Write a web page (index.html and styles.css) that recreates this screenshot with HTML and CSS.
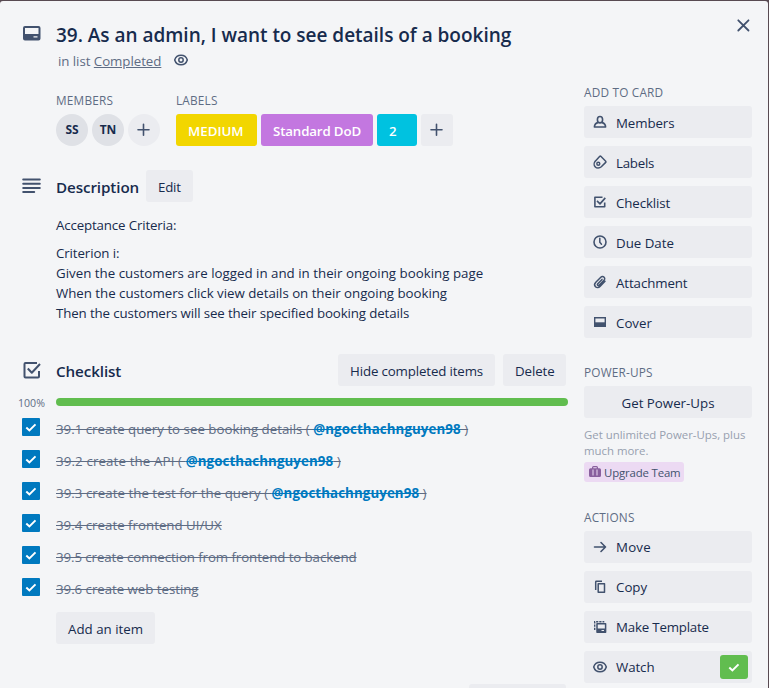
FILE: index.html
```html
<!DOCTYPE html>
<html lang="en">
<head>
<meta charset="utf-8">
<title>Card details</title>
<link rel="stylesheet" href="styles.css">
</head>
<body>
<svg class="defs" width="0" height="0">
  <symbol id="card" viewBox="0 0 20 18"><path fill="none" stroke="currentColor" stroke-width="2" d="M3 3h13.500a1 1 0 0 1 1 1v10.500a1 1 0 0 1-1 1H3a1 1 0 0 1-1-1V4a1 1 0 0 1 1-1z"/><path fill="currentColor" fill-rule="evenodd" d="M2 10h16v5.500H2zM11.500 12.300v1.200h4v-1.200z"/></symbol>
  <symbol id="eye" viewBox="0 0 16 14"><path fill="none" stroke="currentColor" stroke-width="1.500" d="M1.700 7C2.700 3.700 5 2.300 8 2.300S13.300 3.700 14.300 7C13.300 10.300 11 11.700 8 11.700S2.700 10.300 1.700 7z"/><circle cx="8" cy="7" r="2.200" fill="none" stroke="currentColor" stroke-width="1.500"/></symbol>
  <symbol id="plus" viewBox="0 0 14 14"><path stroke="currentColor" stroke-width="1.600" stroke-linecap="round" d="M6.500 1.300v10.900M1 6.700h11"/></symbol>
  <symbol id="check" viewBox="0 0 18 18"><path fill="none" stroke="currentColor" stroke-width="2" d="M4.300 9.500l3.100 2.900 6.100-6"/></symbol>
  <symbol id="checklist" viewBox="0 0 20 20"><path fill="none" stroke="currentColor" stroke-width="2" stroke-linejoin="round" d="M15 3H3.500a1 1 0 0 0-1 1v12.500a1 1 0 0 0 1 1H16a1 1 0 0 0 1-1V11M5.800 8.500l4 4.200L18 4"/></symbol>
  <symbol id="checklist-s" viewBox="0 0 16 16"><path fill="none" stroke="currentColor" stroke-width="1.600" stroke-linejoin="round" d="M10.500 3.200H2.900v9.600h9.800V8.500M5 6.900l3 3 5.300-6"/></symbol>
  <symbol id="person" viewBox="0 0 16 16"><path fill="none" stroke="currentColor" stroke-width="1.600" stroke-linejoin="round" d="M6 8.600C3.600 9 2.500 10.300 2.400 13h11.200C13.500 10.300 12.400 9 10 8.600"/><ellipse cx="8" cy="5.700" rx="2.600" ry="3.200" fill="none" stroke="currentColor" stroke-width="1.600"/></symbol>
  <symbol id="tag" viewBox="0 0 16 16"><path fill="none" stroke="currentColor" stroke-width="1.500" stroke-linejoin="round" d="M8.800 2.300l4.900 4.900c.4.400.4.800 0 1.200L9.300 12.800c-1.800 1.700-4.500 1.700-6 .1-1.600-1.600-1.500-4.300.2-6l4.300-4.600c.3-.3.700-.3 1 0z"/><circle cx="6.300" cy="9.700" r="1.500" fill="none" stroke="currentColor" stroke-width="1.400"/></symbol>
  <symbol id="clock" viewBox="0 0 16 16"><circle cx="8" cy="8" r="6" fill="none" stroke="currentColor" stroke-width="1.600"/><path fill="none" stroke="currentColor" stroke-width="1.500" stroke-linecap="round" d="M7.800 4.300v4l1.700 1.900"/></symbol>
  <symbol id="clip" viewBox="0 0 16 16"><path fill="none" stroke="currentColor" stroke-width="1.500" stroke-linecap="round" d="M13 7.300l-5 5.100c-1.300 1.300-3.300 1.500-4.500.3s-1-3.100.3-4.400l5-5c.9-.9 2.400-1 3.300-.1s.8 2.200-.1 3.100l-4.700 4.800c-.5.500-1.200.6-1.600.1-.5-.4-.4-1 .1-1.500l4.200-4.300"/></symbol>
  <symbol id="cover" viewBox="0 0 16 16"><path fill="none" stroke="currentColor" stroke-width="1.400" d="M2.700 3.700h10.600v8.600H2.700z"/><path fill="currentColor" d="M2 8.300h12V13H2z"/></symbol>
  <symbol id="arrow" viewBox="0 0 16 16"><path fill="none" stroke="currentColor" stroke-width="1.600" stroke-linecap="round" stroke-linejoin="round" d="M2.500 8h11M9 3.500L13.500 8 9 12.500"/></symbol>
  <symbol id="copy" viewBox="0 0 16 16"><path fill="none" stroke="currentColor" stroke-width="1.500" stroke-linejoin="round" d="M6.200 4.700h6.300v8.600H6.200z"/><path fill="none" stroke="currentColor" stroke-width="1.500" d="M3.700 11V3a.7.7 0 0 1 .7-.7H10"/></symbol>
  <symbol id="template" viewBox="0 0 16 16"><path fill="none" stroke="currentColor" stroke-width="1.400" stroke-dasharray="2.200 1" d="M2.700 11V2.800h9.600"/><path fill="none" stroke="currentColor" stroke-width="1.500" stroke-linejoin="round" d="M5 4.800h8.600v8.400H5z"/><path fill="currentColor" fill-rule="evenodd" d="M5 9.500h8.600v3.700H5zM9.500 11v1h2.500v-1z"/></symbol>
  <symbol id="case" viewBox="0 0 14 14"><path fill="currentColor" fill-rule="evenodd" d="M4 3.200V2.500A1.500 1.500 0 0 1 5.500 1h3A1.500 1.500 0 0 1 10 2.500v.7h1.500A1.500 1.500 0 0 1 13 4.700v5.800a1.500 1.500 0 0 1-1.500 1.500h-9A1.500 1.500 0 0 1 1 10.500V4.700a1.500 1.500 0 0 1 1.500-1.500zM5.300 3.200h3.400v-.9H5.300zM4.500 4.500v6h1v-6zM8.500 4.500v6h1v-6z"/></symbol>
</svg>
<div class="dialog">
  <header class="head">
    <svg class="ico card-ico" width="20" height="18"><use href="#card"/></svg>
    <div class="headings">
      <h1>39. As an admin, I want to see details of a booking</h1>
      <p class="inlist"><span>in list <a>Completed</a></span><svg class="ico" width="16" height="14"><use href="#eye"/></svg></p>
    </div>
    <svg class="ico close" width="14" height="14" viewBox="0 0 14 14"><path stroke="currentColor" stroke-width="1.800" stroke-linecap="round" d="M2.300 2.300l10.200 10.200M12.500 2.300L2.300 12.500"/></svg>
  </header>
  <div class="columns">
    <main>
      <div class="meta">
        <section><h3 class="members-h">MEMBERS</h3><div class="row"><span class="avatar">SS</span><span class="avatar">TN</span><span class="avatar add"><svg class="ico" width="14" height="14"><use href="#plus"/></svg></span></div></section>
        <section><h3 class="labels-h">LABELS</h3><div class="row"><span class="label yellow">MEDIUM</span><span class="label purple">Standard DoD</span><span class="label sky">2</span><span class="label add"><svg class="ico" width="14" height="14"><use href="#plus"/></svg></span></div></section>
      </div>
      <section class="desc">
        <div class="section-head"><svg class="ico" width="19" height="16" viewBox="0 0 19 16"><path stroke="currentColor" stroke-width="2" stroke-linecap="round" d="M1.200 1.500h16.600M1.200 5.700h16.600M1.200 9.900h16.600M1.200 14.100h11"/></svg><h2 class="desc-h">Description</h2><button class="edit">Edit</button></div>
        <div class="prose"><p class="l1">Acceptance Criteria:</p><p><span class="l2">Criterion i:</span><br><span class="l3">Given the customers are logged in and in their ongoing booking page</span><br><span class="l4">When the customers click view details on their ongoing booking</span><br><span class="l5">Then the customers will see their specified booking details</span></p></div>
      </section>
      <section class="checklist">
        <div class="section-head"><svg class="ico" width="20" height="20"><use href="#checklist"/></svg><h2 class="check-h">Checklist</h2><button class="hide">Hide completed items</button><button class="delete">Delete</button></div>
        <div class="progress"><span>100%</span><div class="bar"></div></div>
        <ul>
          <li><svg class="box" width="18" height="18"><use href="#check"/></svg><s class="t1">39.1 create query to see booking details ( <b>@ngocthachnguyen98</b> )</s></li>
          <li><svg class="box" width="18" height="18"><use href="#check"/></svg><s class="t2">39.2 create the API ( <b>@ngocthachnguyen98</b> )</s></li>
          <li><svg class="box" width="18" height="18"><use href="#check"/></svg><s class="t3">39.3 create the test for the query ( <b>@ngocthachnguyen98</b> )</s></li>
          <li><svg class="box" width="18" height="18"><use href="#check"/></svg><s class="t4">39.4 create frontend UI/UX</s></li>
          <li><svg class="box" width="18" height="18"><use href="#check"/></svg><s class="t5">39.5 create connection from frontend to backend</s></li>
          <li><svg class="box" width="18" height="18"><use href="#check"/></svg><s class="t6">39.6 create web testing</s></li>
        </ul>
        <button class="add-item">Add an item</button>
      </section>
      <div class="next"><button class="partial"></button></div>
    </main>
    <aside>
      <h3 class="addcard-h">ADD TO CARD</h3>
      <button><svg class="ico" width="16" height="16"><use href="#person"/></svg><span class="b1">Members</span></button>
      <button><svg class="ico" width="16" height="16"><use href="#tag"/></svg><span class="b2">Labels</span></button>
      <button><svg class="ico" width="16" height="16"><use href="#checklist-s"/></svg><span class="b3">Checklist</span></button>
      <button><svg class="ico" width="16" height="16"><use href="#clock"/></svg><span class="b4">Due Date</span></button>
      <button><svg class="ico" width="16" height="16"><use href="#clip"/></svg><span class="b5">Attachment</span></button>
      <button><svg class="ico" width="16" height="16"><use href="#cover"/></svg><span class="b6">Cover</span></button>
      <h3 class="power-h">POWER-UPS</h3>
      <button class="center"><span class="b7">Get Power-Ups</span></button>
      <p class="promo">Get unlimited Power-Ups, plus<br>much more.</p>
      <a class="upgrade"><svg width="14" height="14"><use href="#case"/></svg><span>Upgrade Team</span></a>
      <h3 class="actions-h">ACTIONS</h3>
      <button><svg class="ico" width="16" height="16"><use href="#arrow"/></svg><span class="b8">Move</span></button>
      <button><svg class="ico" width="16" height="16"><use href="#copy"/></svg><span class="b9">Copy</span></button>
      <button><svg class="ico" width="16" height="16"><use href="#template"/></svg><span class="b10">Make Template</span></button>
      <button><svg class="ico" width="16" height="16"><use href="#eye"/></svg><span class="b11">Watch</span><span class="on"><svg width="18" height="18"><use href="#check"/></svg></span></button>
    </aside>
  </div>
</div>
</body>
</html>
```
FILE: styles.css
```css
* { box-sizing: border-box; margin: 0; padding: 0; }
html, body { height: 688px; overflow: hidden; }
body { background: #584a52; color: #172b4d; font: 13.3px/20px "Open Sans", "Noto Sans", sans-serif; }
.defs { position: absolute; }
svg { display: block; flex: none; }
.ico { color: #42526e; }
.dialog { width: 768px; height: 687px; margin-top: 1px; background: #f4f5f7; border-radius: 3px 3px 0 0; overflow: hidden; white-space: nowrap; }
.head { display: flex; height: 83px; padding: 0 18px 0 22px; }
.card-ico { margin-top: 23px; }
.headings { flex: 1; padding: 20px 0 0 14px; }
h1 { font-size: 19px; line-height: 28px; font-weight: 600; letter-spacing: -.02px; }
.inlist { display: flex; align-items: center; gap: 12px; padding-left: 2px; margin-top: 2px; color: #5e6c84; letter-spacing: -.05px; }
.inlist .ico { margin-top: -2px; }
.inlist a { text-decoration: underline; }
.close { margin-top: 17px; }
.columns { display: flex; justify-content: space-between; padding-right: 16px; }
main { width: 568px; padding-left: 22px; }
h3 { font-size: 11.800px; line-height: 20px; font-weight: 400; color: #5e6c84; letter-spacing: .2px; }
.meta { display: flex; gap: 16px; padding: 6px 0 0 34px; }
.meta section { flex: none; }
.meta section:first-child { width: 104px; }
.meta h3 { height: 20px; line-height: 21px; margin-bottom: 4px; }
.row { display: flex; gap: 4px; }
.avatar { width: 32px; height: 32px; border-radius: 50%; background: #dfe1e6; display: flex; align-items: center; justify-content: center; font-size: 12px; font-weight: 700; }
.label { height: 32px; border-radius: 3px; padding: 0 12px; line-height: 34px; color: #fff; font-weight: 600; }
.yellow { background: #f2d600; width: 81px; }
.purple { background: #c377e0; width: 112px; letter-spacing: -.15px; }
.sky { background: #00c2e0; width: 40px; }
.add { background: #ebecf0; }
.label.add { width: 32px; padding: 9px; }
button { height: 32px; border: 0; border-radius: 3px; background: #ebecf0; color: inherit; font: inherit; line-height: 32px; padding: 1px 12px 0; text-align: left; white-space: nowrap; }
.section-head { display: flex; align-items: center; height: 32px; }
.section-head .ico { margin-right: 15px; }
.checklist .ico { margin-right: 14px; }
h2 { font-size: 15.200px; line-height: 20px; font-weight: 600; padding-top: 1px; letter-spacing: -.1px; }
.desc { margin-top: 24px; }
.desc-h { width: 90px; }
.edit { width: 47px; letter-spacing: -.2px; }
.prose { padding: 13px 0 0 34px; }
.prose p + p { margin-top: 8px; }
.l1 { letter-spacing: -.15px; }
.l2 { letter-spacing: -.1px; }
.l3 { letter-spacing: .01px; }
.l4 { letter-spacing: -.03px; }
.l5 { letter-spacing: -.13px; }
.checklist { margin-top: 31px; }
.check-h { flex: 1; }
.hide { width: 157px; margin-right: 8px; letter-spacing: -.14px; }
.delete { width: 63px; margin-right: 2px; letter-spacing: -.1px; }
.progress { display: flex; align-items: center; height: 20px; margin: 6px 0 0 -4px; }
.progress span { width: 38px; font-size: 10.600px; color: #5e6c84; padding-top: 2px; }
.bar { width: 512px; height: 8px; border-radius: 4px; background: #61bd4f; }
ul { list-style: none; margin-top: 6px; }
li { display: flex; height: 32px; color: #5e6c84; }
.box { background: #0079bf; color: #fff; border-radius: 1px; margin-right: 16px; }
li s { padding-top: 1px; }
li b { font-weight: 700; color: #0079bf; text-decoration: line-through; letter-spacing: .1px; }
.t2 { letter-spacing: .13px; }
.t3 { letter-spacing: .03px; }
.t5 { letter-spacing: -.09px; }
.t6 { letter-spacing: -.04px; }
.add-item { margin: 2px 0 0 34px; width: 99px; display: block; }
.next { display: flex; justify-content: flex-end; padding: 40px 2px 0 0; }
.partial { width: 97px; }
aside { width: 168px; margin-top: -2px; }
aside h3 { margin-bottom: 4px; }
aside button { display: flex; align-items: center; width: 168px; margin-bottom: 8px; padding: 0 4px 0 8px; }
aside button > span { padding-top: 1px; }
aside button .ico { margin-right: 8px; margin-top: -1px; }
aside .center { justify-content: center; padding: 0 12px; }
.addcard-h { height: 20px; line-height: 21px; }
.power-h { height: 36px; padding-top: 16px; line-height: 21px; }
.b1, .b3, .b5, .b11 { letter-spacing: -.1px; }
.b2 { letter-spacing: -.25px; }
.b8 { letter-spacing: .2px; }
.b10 { letter-spacing: -.2px; }
.promo { font-size: 11.400px; line-height: 16px; color: #97a0af; margin-top: 9px; }
.upgrade { display: flex; align-items: center; width: 100px; height: 20px; padding-left: 4px; gap: 2px; margin-top: 3px; border-radius: 3px; background: #ecdaf3; font-size: 11.400px; letter-spacing: -.15px; color: #42526e; }
.upgrade span { padding-top: 1px; }
.upgrade svg { color: #89609e; }
.actions-h { height: 45px; padding-top: 25px; line-height: 21px; }
.actions-h ~ button > span:not(.on) { padding-top: 0; }
aside button .on { margin-left: auto; width: 28px; height: 24px; padding: 3px 5px; border-radius: 3px; background: #61bd4f; color: #fff; }
```
